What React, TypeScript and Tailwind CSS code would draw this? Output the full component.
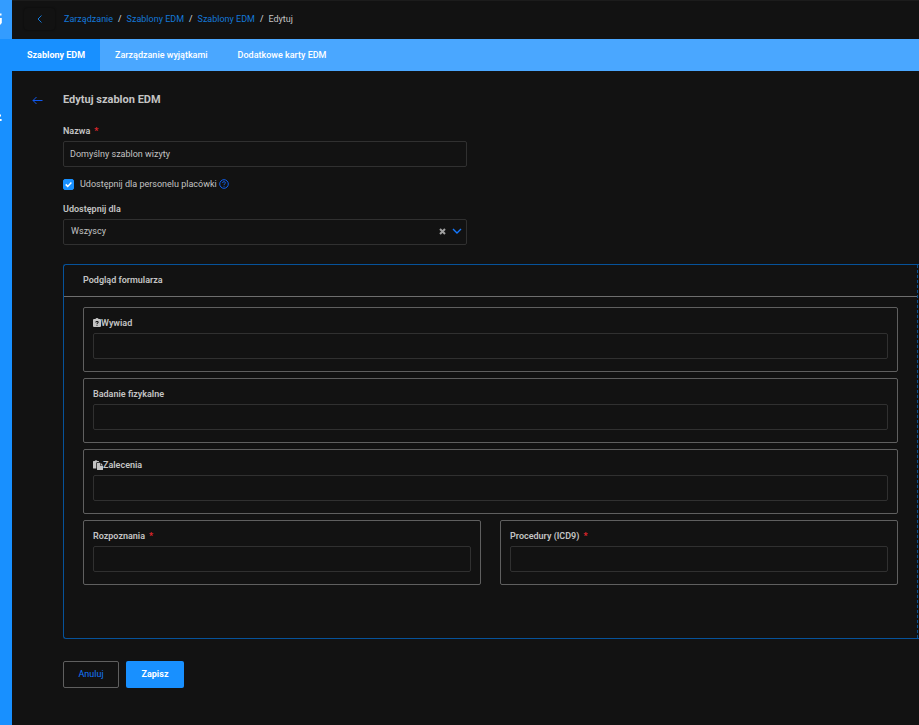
import React, { useState } from "react";

const crumbs = ["Zarządzanie", "Szablony EDM", "Szablony EDM"];
const tabs = ["Szablony EDM", "Zarządzanie wyjątkami", "Dodatkowe karty EDM"];

function Required() {
  return <span className="ml-1 font-bold text-[#e0262d]">*</span>;
}

function ClipboardIcon() {
  return (
    <svg viewBox="0 0 8 10" className="h-[10px] w-2" fill="currentColor" aria-hidden="true">
      <path
        fillRule="evenodd"
        d="M2.5 1a1.5 1 0 0 1 3 0H7a1 1 0 0 1 1 1v6a1 1 0 0 1-1 1H1a1 1 0 0 1-1-1V2a1 1 0 0 1 1-1zM2.3 4.4h1c.1-.6 1.3-.6 1.3 0 0 .6-1.1.5-1.1 1.6h1c0-.7 1.2-.7 1.2-1.7C5.700 2.600 2.400 2.600 2.300 4.400zM3.500 6.700v1h1v-1z"
      />
    </svg>
  );
}

function PasteIcon() {
  return (
    <svg viewBox="0 0 10 10" className="h-[10px] w-[10px]" fill="currentColor" aria-hidden="true">
      <path d="M0 1.500A.6.6 0 0 1 .6 1h1a1.500 1.200 0 0 1 2.800 0h1a.6.6 0 0 1 .6.5V2H4.500a1.200 1.200 0 0 0-1.200 1.200V8.500H.6A.6.6 0 0 1 0 7.900z" />
      <path d="M4 3.200a.5.5 0 0 1 .5-.5H7v2.500a.6.6 0 0 0 .6.600H10v3.700a.5.5 0 0 1-.5.500h-5A.5.500 0 0 1 4 9.500zM7.600 2.700 10 5.200H7.600z" />
    </svg>
  );
}

type FieldCardProps = {
  id: string;
  label: string;
  icon?: React.ReactNode;
  required?: boolean;
};

function FieldCard({ id, label, icon, required }: FieldCardProps) {
  return (
    <div className="flex-1 rounded-[2px] border border-[#5f5f5f] px-[9px] pt-[9px] pb-3">
      <label htmlFor={id} className="mb-1 flex h-3 items-center font-semibold">
        {icon}
        {label}
        {required && <Required />}
      </label>
      <input id={id} type="text" className="block h-[26px] w-full rounded-[2px] border border-[#303030] px-1.5 outline-none focus:border-[#1890ff]" />
    </div>
  );
}

export default function App() {
  const [name, setName] = useState("Domyślny szablon wizyty");
  const [shared, setShared] = useState(true);
  const [audience, setAudience] = useState("Wszyscy");

  return (
    <div className="flex min-h-screen overflow-hidden bg-[#121212] font-[Roboto,sans-serif] text-[9px] leading-3 text-[#c4c4c4]">
      {/* Collapsed sidebar */}
      <aside className="w-3 shrink-0 bg-[#1890ff] text-white">
        <div className="h-[39px] bg-[#339cff] pt-3">
          <svg viewBox="0 0 12 14" className="h-[14px] w-3" aria-hidden="true">
            <path d="M0 1.5h1.5v2H0zM0 6h1.8v5L0 13z" fill="currentColor" />
          </svg>
        </div>
        <svg viewBox="0 0 12 10" className="mt-[73px] h-[10px] w-3" aria-hidden="true">
          <path d="M0 2.500h1v2H0zM0 7h1.600v2H0z" fill="currentColor" />
        </svg>
      </aside>

      <div className="flex min-w-0 flex-1 flex-col">
        <header className="flex h-[39px] items-center border-t border-[#1c1c1c] pb-0.5 pl-3">
          <button type="button" aria-label="Wstecz" className="flex h-[22px] w-[31px] items-center justify-center rounded-sm shadow-[0_0_2px_#0a0a0a] text-[#1478d8]">
            <svg viewBox="0 0 6 8" className="h-2 w-1.5" fill="none" stroke="currentColor" aria-hidden="true">
              <path d="M4.5 0.5 1 4l3.5 3.5" />
            </svg>
          </button>
          <nav className="ml-[9px] flex items-center">
            {crumbs.map((crumb, i) => (
              <React.Fragment key={i}>
                <a href="#" className="text-[#1478d8]">{crumb}</a>
                <span className="px-[5px] font-medium">/</span>
              </React.Fragment>
            ))}
            <span>Edytuj</span>
          </nav>
        </header>

        <nav className="flex h-8 bg-[#4aa7ff] font-medium text-white">
          {tabs.map((tab, i) => (
            <a key={tab} href="#" className={i === 0 ? "flex items-center bg-[#1890ff] px-[15px] font-bold" : "flex items-center px-[15px]"}>
              {tab}
            </a>
          ))}
        </nav>

        <main className="pl-5 pt-[21px]">
          <div className="flex h-4 items-center">
            <a href="#" aria-label="Powrót" className="mr-5 text-[#1058f0]">
              <svg viewBox="0 0 11 9" className="h-[9px] w-[11px]" fill="none" stroke="currentColor" aria-hidden="true">
                <path d="M10.5 4.5H1M4.500 1 1 4.500 4.500 8" />
              </svg>
            </a>
            <h1 className="text-[11px] font-bold">Edytuj szablon EDM</h1>
          </div>

          <form className="ml-[31px]" onSubmit={(e) => e.preventDefault()}>
            <div className="max-w-[404px]">
              <label htmlFor="name" className="mt-[17px] mb-1 flex h-3 items-center font-semibold">
                Nazwa
                <Required />
              </label>
              <input
                id="name"
                type="text"
                value={name}
                onChange={(e) => setName(e.target.value)}
                className="block h-[26px] w-full rounded-[2px] border border-[#303030] px-1.5 outline-none focus:border-[#1890ff]"
              />

              <div className="mt-[11px] flex h-3 items-center">
                <span className="relative h-[11px] w-[11px]">
                  <input
                    id="shared"
                    type="checkbox"
                    checked={shared}
                    onChange={(e) => setShared(e.target.checked)}
                    className="block h-[11px] w-[11px] appearance-none rounded-[2px] border border-[#1890ff] checked:bg-[#1890ff]"
                  />
                  {shared && (
                    <svg viewBox="0 0 11 11" className="pointer-events-none absolute inset-0 h-[11px] w-[11px]" fill="none" stroke="#ffffff" strokeWidth="1.5" aria-hidden="true">
                      <path d="m2.7 5.4 2 2L8.4 3.6" />
                    </svg>
                  )}
                </span>
                <label htmlFor="shared" className="ml-1.5">Udostępnij dla personelu placówki</label>
                <svg viewBox="0 0 10 10" className="ml-0.5 h-[10px] w-[10px] text-[#1060f0]" fill="none" stroke="currentColor" aria-hidden="true">
                  <circle cx="5" cy="5" r="4.3" strokeWidth="1" />
                  <path d="M3.6 4C3.6 2.2 6.4 2.3 6.4 3.9 6.4 4.9 5 4.8 5 6M5 6.8v.9" strokeWidth="1" />
                </svg>
              </div>

              <label htmlFor="audience" className="mt-[13px] mb-1 flex h-3 items-center font-semibold">Udostępnij dla</label>
              <div className="relative">
                <select
                  id="audience"
                  value={audience}
                  onChange={(e) => setAudience(e.target.value)}
                  className="block h-[26px] w-full appearance-none rounded-[2px] border border-[#303030] bg-[#121212] px-[7px] pb-0.5 outline-none"
                >
                  <option value=""></option>
                  <option>Wszyscy</option>
                </select>
                <button type="button" aria-label="Wyczyść" onClick={() => setAudience("")} className="absolute top-[9px] right-[21px] text-[#a0a0a0]">
                  <svg viewBox="0 0 7 7" className="h-[7px] w-[7px]" stroke="currentColor" strokeWidth="2" aria-hidden="true">
                    <path d="m1 1 5 5M6 1 1 6" />
                  </svg>
                </button>
                <svg viewBox="0 0 10 6" className="pointer-events-none absolute top-[9px] right-[5px] h-1.5 w-[10px] text-[#1478ff]" fill="none" stroke="currentColor" strokeWidth="1.4" aria-hidden="true">
                  <path d="m1 1 4 4 4-4" />
                </svg>
              </div>
            </div>

            {/* Form preview */}
            <section className="mt-[19px] min-h-[375px] rounded-l-[3px] border-y border-l border-[#06529a]">
              <div className="mr-px min-h-[373px] border-r border-dashed border-[#06529a]">
                <h2 className="flex h-8 items-center border-b border-[#6e6e6e] pb-0.5 pl-[19px] font-semibold">Podgląd formularza</h2>
                <div className="flex flex-col gap-1.5 px-[19px] pt-[10px]">
                  <FieldCard id="interview" label="Wywiad" icon={<ClipboardIcon />} />
                  <FieldCard id="exam" label="Badanie fizykalne" />
                  <FieldCard id="advice" label="Zalecenia" icon={<PasteIcon />} />
                  <div className="flex gap-[19px]">
                    <FieldCard id="diagnoses" label="Rozpoznania" required />
                    <FieldCard id="procedures" label="Procedury (ICD9)" required />
                  </div>
                </div>
              </div>
            </section>

            <div className="mt-[22px] flex gap-[7px]">
              <button type="button" className="h-[27px] w-14 rounded-[2px] border border-[#5f5f5f] pb-0.5 text-[#1478ff]">Anuluj</button>
              <button type="submit" className="h-[27px] w-[58px] rounded-[2px] bg-[#1890ff] pb-0.5 font-bold text-white">Zapisz</button>
            </div>
          </form>
        </main>
      </div>
    </div>
  );
}
